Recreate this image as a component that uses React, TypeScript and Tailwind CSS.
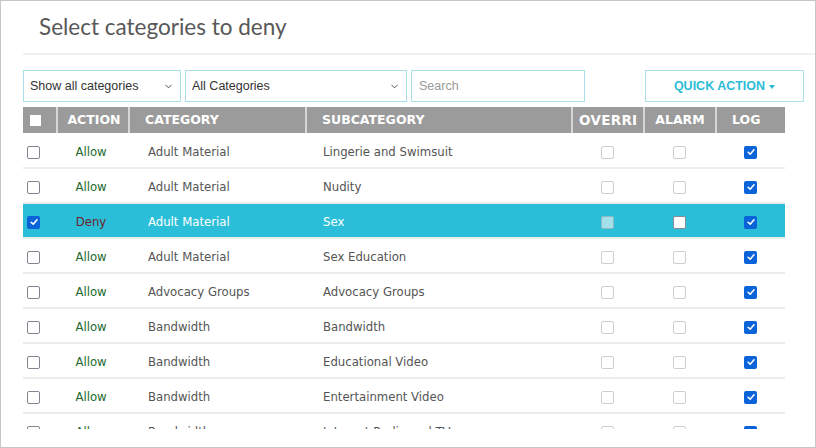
import React from 'react';
import { ChevronDown } from 'lucide-react';

type Row = { action: 'Allow' | 'Deny'; category: string; sub: string; selected?: boolean };

const rows: Row[] = [
  { action: 'Allow', category: 'Adult Material', sub: 'Lingerie and Swimsuit' },
  { action: 'Allow', category: 'Adult Material', sub: 'Nudity' },
  { action: 'Deny', category: 'Adult Material', sub: 'Sex', selected: true },
  { action: 'Allow', category: 'Adult Material', sub: 'Sex Education' },
  { action: 'Allow', category: 'Advocacy Groups', sub: 'Advocacy Groups' },
  { action: 'Allow', category: 'Bandwidth', sub: 'Bandwidth' },
  { action: 'Allow', category: 'Bandwidth', sub: 'Educational Video' },
  { action: 'Allow', category: 'Bandwidth', sub: 'Entertainment Video' },
  { action: 'Allow', category: 'Bandwidth', sub: 'Internet Radio and TV' },
];

const Tick = () => (
  <svg viewBox="0 0 12 12" className="w-[10px] h-[10px]">
    <path d="M2.5 6.3 L5 8.6 L9.6 3.4" fill="none" stroke="white" strokeWidth="1.9" strokeLinecap="round" strokeLinejoin="round" />
  </svg>
);

const Box = ({ kind }: { kind: 'empty' | 'checked' | 'disabled' | 'disabledOn' | 'white' }) => {
  if (kind === 'checked') {
    return (
      <span className="w-[13px] h-[13px] rounded-[2px] bg-[#0b63d9] flex items-center justify-center">
        <Tick />
      </span>
    );
  }
  if (kind === 'disabled') return <span className="w-[13px] h-[13px] rounded-[2px] border-[1.5px] border-[#cdcdd2] bg-white" />;
  if (kind === 'disabledOn') return <span className="w-[13px] h-[13px] rounded-[2px] border-[1.5px] border-[#8fb9c4] bg-[#a3e0ec]" />;
  if (kind === 'white') return <span className="w-[13px] h-[13px] rounded-[2px] border-[1.5px] border-[#8b8b93] bg-white" />;
  return <span className="w-[13px] h-[13px] rounded-[2px] border-[1.5px] border-[#85858f] bg-white" />;
};

const cols = 'grid grid-cols-[33px_72px_177px_266px_72px_72px_70px]';

export default function App() {
  return (
    <div className="w-[816px] h-[448px] border border-[#c6c6c6] bg-white overflow-hidden" style={{ fontFamily: '"DejaVu Sans Condensed", "DejaVu Sans", sans-serif' }}>
      <div className="pl-[38px] pt-[11px] h-[52px] text-[22.5px] text-[#585858] font-['Lato',sans-serif] leading-[30px]">
        Select categories to deny
      </div>
      <div className="ml-[22px] border-t-2 border-[#f0f0f0]" />

      <div className="flex pl-[22px] mt-[15px] h-[32px] font-['Liberation_Sans',Arial,sans-serif] text-[12.5px]">
        <div className="w-[158px] border border-[#a9e0ea] flex items-center justify-between pl-[6px] pr-[6px] text-[#333]">
          <span>Show all categories</span>
          <ChevronDown size={11} strokeWidth={2} className="text-[#444]" />
        </div>
        <div className="w-[222px] ml-[4px] border border-[#a9e0ea] flex items-center justify-between pl-[6px] pr-[6px] text-[#333]">
          <span>All Categories</span>
          <ChevronDown size={11} strokeWidth={2} className="text-[#444]" />
        </div>
        <div className="w-[174px] ml-[4px] border border-[#a9e0ea] flex items-center pl-[7px] text-[#9a9a9a]">
          Search
        </div>
        <div className="w-[159px] ml-[60px] border border-[#a9e0ea] flex items-center justify-center gap-[4px] text-[#2bbcd6] font-bold text-[12.5px] pt-[1px]">
          <span>QUICK ACTION</span>
          <span className="w-0 h-0 border-l-[3.5px] border-r-[3.5px] border-t-[4px] border-l-transparent border-r-transparent border-t-[#2bbcd6] mt-[1px]" />
        </div>
      </div>

      <div className="ml-[22px] mt-[5px] w-[762px]">
        <div className={`${cols} h-[26px] bg-[#9b9b9b] text-white font-bold text-[12.5px] items-stretch`} style={{ fontFamily: '"DejaVu Sans", sans-serif' }}>
          <div className="flex items-center pl-[7px]">
            <span className="w-[11px] h-[11px] bg-white" />
          </div>
          <div className="flex items-center justify-center pl-[2px] border-l-2 border-[#d6d6d6] overflow-hidden whitespace-nowrap">ACTION</div>
          <div className="flex items-center pl-[15px] border-l-2 border-[#d6d6d6]">CATEGORY</div>
          <div className="flex items-center pl-[15px] border-l-2 border-[#d6d6d6]">SUBCATEGORY</div>
          <div className="flex items-center pl-[6px] border-l-2 border-[#d6d6d6] overflow-hidden whitespace-nowrap text-[13.5px] tracking-[0.3px]">OVERRI</div>
          <div className="flex items-center justify-center border-l-2 border-[#d6d6d6]">ALARM</div>
          <div className="flex items-center pl-[15px] border-l-2 border-[#d6d6d6]">LOG</div>
        </div>

        <div className="h-[296px] pt-[1px] overflow-hidden">
          {rows.map((r, i) => (
            <div key={i} className={`${cols} h-[35px] pt-[3px] border-b-2 border-[#ececec] text-[13px] ${r.selected ? 'bg-[#2bbed8] text-white' : 'text-[#555]'}`}>
              <div className="flex items-center pl-[4px]">
                <Box kind={r.selected ? 'checked' : 'empty'} />
              </div>
              <div className={`flex items-center justify-center pr-[2px] ${r.action === 'Deny' ? 'text-[#6e1f2c]' : 'text-[#23692f]'}`}>{r.action}</div>
              <div className="flex items-center pl-[20px]">{r.category}</div>
              <div className="flex items-center pl-[18px]">{r.sub}</div>
              <div className="flex items-center justify-center">
                <Box kind={r.selected ? 'disabledOn' : 'disabled'} />
              </div>
              <div className="flex items-center justify-center">
                <Box kind={r.selected ? 'white' : 'disabled'} />
              </div>
              <div className="flex items-center justify-center pl-[1px]">
                <Box kind="checked" />
              </div>
            </div>
          ))}
        </div>
      </div>
    </div>
  );
}
